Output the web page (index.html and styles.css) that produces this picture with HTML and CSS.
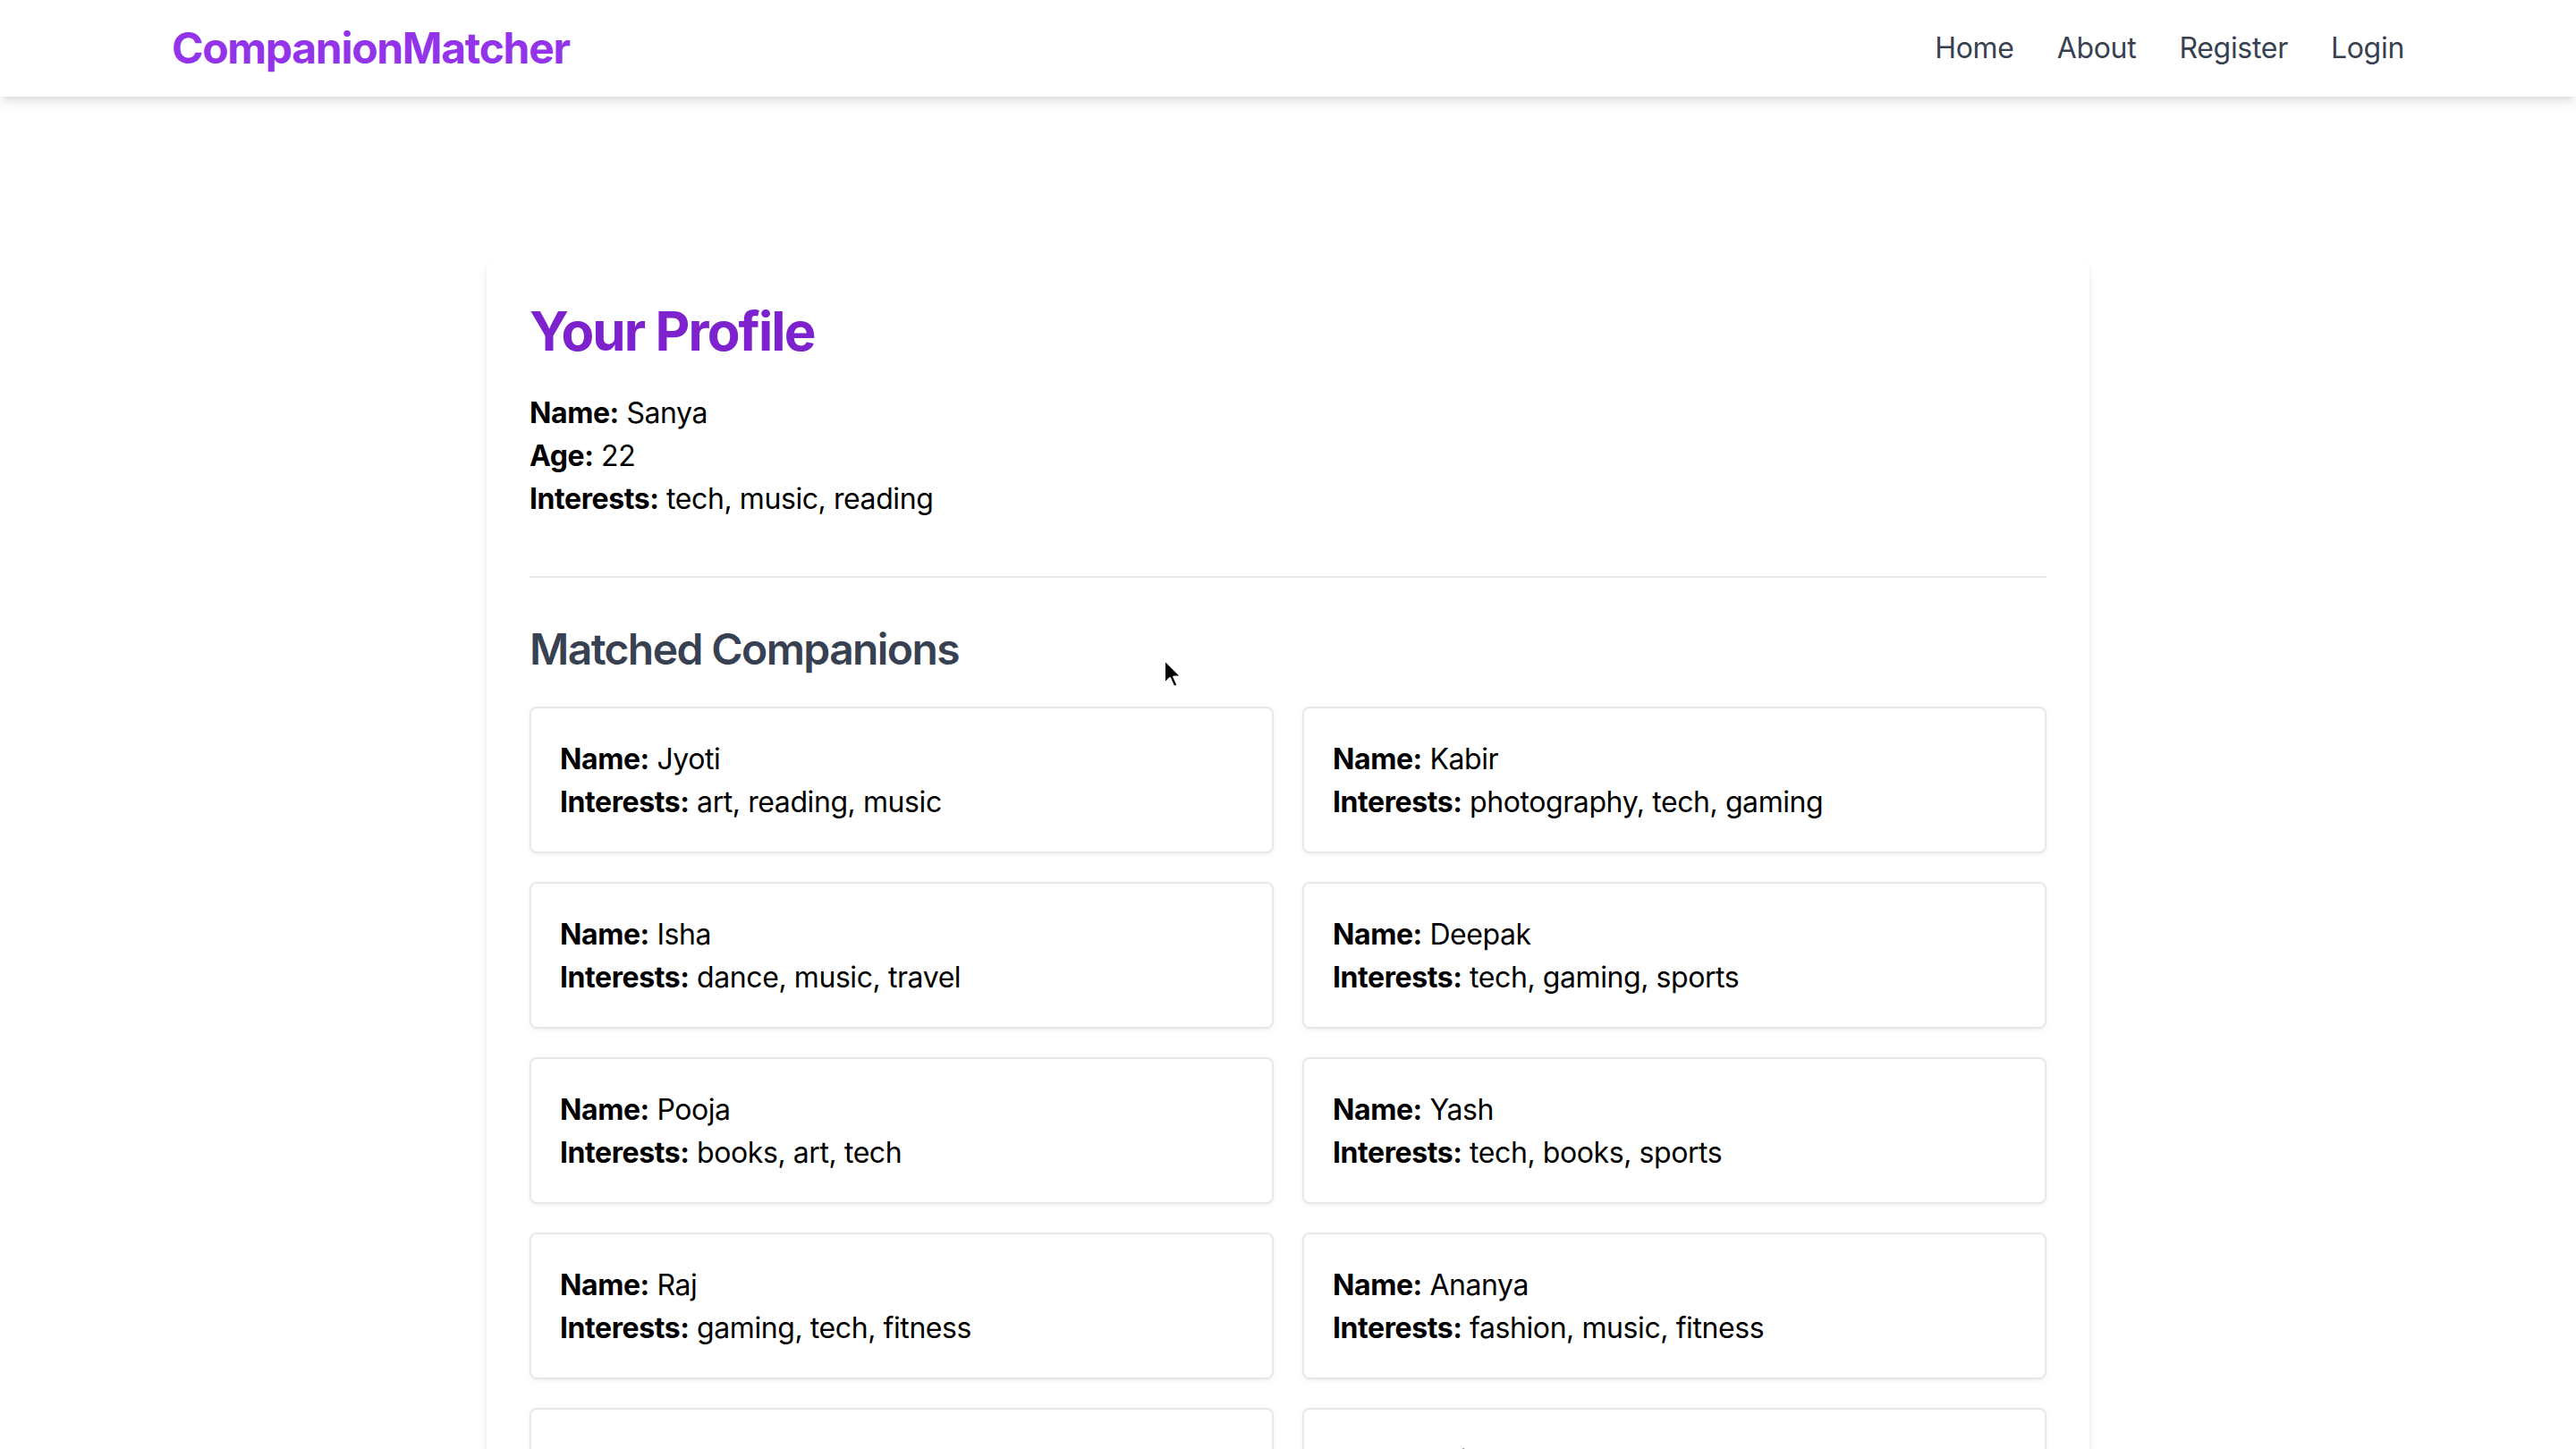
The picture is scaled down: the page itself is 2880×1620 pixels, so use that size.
FILE: index.html
```html
<!DOCTYPE html>
<html lang="en">
<head>
<meta charset="utf-8">
<title>CompanionMatcher</title>
<link rel="stylesheet" href="styles.css">
</head>
<body>
<nav class="navbar">
  <div class="nav-inner">
    <a class="logo" href="#">CompanionMatcher</a>
    <div class="nav-links">
      <a href="#">Home</a>
      <a href="#">About</a>
      <a href="#">Register</a>
      <a href="#">Login</a>
    </div>
  </div>
</nav>
<main class="panel">
  <h1 class="title">Your Profile</h1>
  <div class="profile">
    <p><strong>Name:</strong> Sanya</p>
    <p><strong>Age:</strong> 22</p>
    <p><strong>Interests:</strong> tech, music, reading</p>
  </div>
  <hr class="divider">
  <h2 class="subtitle">Matched Companions</h2>
  <div class="grid">
    <div class="card"><p><strong>Name:</strong> Jyoti</p><p><strong>Interests:</strong> art, reading, music</p></div>
    <div class="card"><p><strong>Name:</strong> Kabir</p><p><strong>Interests:</strong> photography, tech, gaming</p></div>
    <div class="card"><p><strong>Name:</strong> Isha</p><p><strong>Interests:</strong> dance, music, travel</p></div>
    <div class="card"><p><strong>Name:</strong> Deepak</p><p><strong>Interests:</strong> tech, gaming, sports</p></div>
    <div class="card"><p><strong>Name:</strong> Pooja</p><p><strong>Interests:</strong> books, art, tech</p></div>
    <div class="card"><p><strong>Name:</strong> Yash</p><p><strong>Interests:</strong> tech, books, sports</p></div>
    <div class="card"><p><strong>Name:</strong> Raj</p><p><strong>Interests:</strong> gaming, tech, fitness</p></div>
    <div class="card"><p><strong>Name:</strong> Ananya</p><p><strong>Interests:</strong> fashion, music, fitness</p></div>
    <div class="card"><p><strong>Name:</strong> Meera</p><p><strong>Interests:</strong> music, travel, art</p></div>
    <div class="card"><p><strong>Name:</strong> Arjun</p><p><strong>Interests:</strong> sports, tech, reading</p></div>
  </div>
</main>
<svg class="cursor" width="24" height="34" viewBox="0 0 24 34" aria-hidden="true">
  <path d="M2 1 L2 27 L8 21 L12.5 31 L16.5 29.2 L12.2 19.6 L20.5 19.6 Z" fill="#000" stroke="#fff" stroke-width="2" stroke-linejoin="round"/>
</svg>
</body>
</html>
```

FILE: styles.css
```css
* { box-sizing: border-box; }

html, body {
  margin: 0;
  padding: 0;
  background: #ffffff;
}

body {
  font-family: Inter, "Noto Sans", "Liberation Sans", sans-serif;
  color: #000000;
  min-height: 1620px;
}

a { text-decoration: none; }

.navbar {
  background: #ffffff;
  box-shadow: 0 8px 12px -2px rgba(0, 0, 0, 0.1), 0 4px 8px -4px rgba(0, 0, 0, 0.1);
  position: relative;
  z-index: 1;
}

.nav-inner {
  max-width: 2560px;
  margin: 0 auto;
  padding: 0 32px;
  height: 108px;
  display: flex;
  align-items: center;
  justify-content: space-between;
}

.logo {
  font-size: 48px;
  line-height: 64px;
  font-weight: 700;
  color: #9333ea;
  letter-spacing: -1.3px;
}

.nav-links {
  display: flex;
  gap: 48px;
}

.nav-links a {
  font-size: 32px;
  line-height: 48px;
  color: #374151;
  letter-spacing: -0.3px;
}

.panel {
  max-width: 1792px;
  margin: 176px auto 0;
  background: #ffffff;
  border-radius: 16px;
  padding: 50px 48px 48px;
  box-shadow: 0 8px 12px -2px rgba(0, 0, 0, 0.1), 0 4px 8px -4px rgba(0, 0, 0, 0.1);
}

.title {
  margin: 0 0 32px;
  font-size: 60px;
  line-height: 72px;
  font-weight: 700;
  color: #7e22ce;
  letter-spacing: -1.9px;
}

.profile p,
.card p {
  margin: 0;
  font-size: 32px;
  line-height: 48px;
  letter-spacing: -0.42px;
}

.divider {
  border: 0;
  height: 2px;
  background: #e5e7eb;
  margin: 62px 0 48px;
}

.subtitle {
  margin: 0 0 32px;
  font-size: 48px;
  line-height: 64px;
  font-weight: 600;
  color: #374151;
  letter-spacing: -1.6px;
}

.grid {
  display: grid;
  grid-template-columns: 1fr 1fr;
  gap: 32px;
}

.card {
  border: 2px solid #e5e7eb;
  border-radius: 8px;
  padding: 33px 32px 31px;
  background: #ffffff;
  box-shadow: 0 2px 4px rgba(0, 0, 0, 0.06);
}

.cursor {
  position: absolute;
  left: 1300px;
  top: 737px;
}
```
